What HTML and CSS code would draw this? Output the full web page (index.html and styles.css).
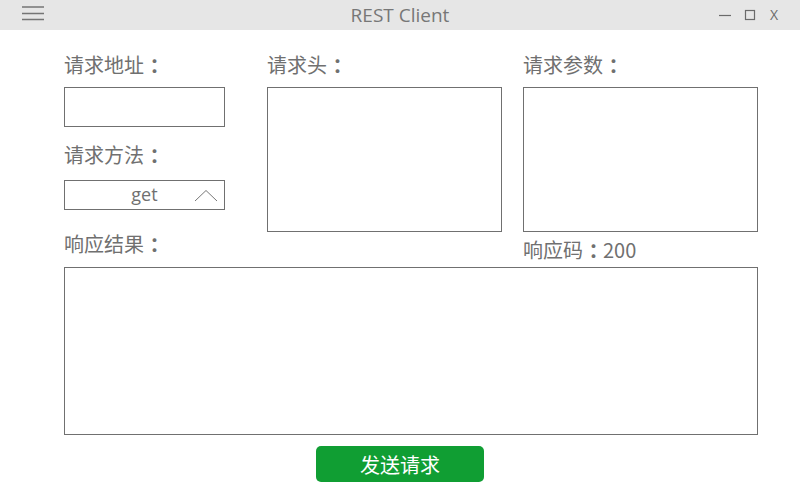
FILE: index.html
```html
<!DOCTYPE html>
<html lang="zh">
<head>
<meta charset="utf-8">
<title>REST Client</title>
<link rel="stylesheet" href="styles.css">
</head>
<body>
<div class="titlebar">
  <div class="menu-btn">
    <svg width="22" height="16" viewBox="0 0 22 16"><path d="M0 1h22M0 7.5h22M0 13.5h22" stroke="#757575" stroke-width="1.4" fill="none"/></svg>
  </div>
  <div class="title">REST Client</div>
  <div class="win-ctrls">
    <svg class="ctl" width="14" height="12" viewBox="0 0 14 12"><path d="M1 6.5h12" stroke="#6a6a6a" stroke-width="1.2"/></svg>
    <svg class="ctl" width="12" height="12" viewBox="0 0 12 12"><rect x="1.5" y="1.5" width="9" height="9" stroke="#6a6a6a" stroke-width="1.2" fill="none"/></svg>
    <span class="close">X</span>
  </div>
</div>
<main class="main">
  <div class="top">
    <div class="col1">
      <div class="label">请求地址<span class="colon">：</span></div>
      <div class="input"></div>
      <div class="label label-method">请求方法<span class="colon">：</span></div>
      <div class="select">
        <span>get</span>
        <svg class="chev" width="24" height="13" viewBox="0 0 24 13"><path d="M1 12L12 1.5L23 12" stroke="#777" stroke-width="1" fill="none"/></svg>
      </div>
    </div>
    <div class="col2">
      <div class="label">请求头<span class="colon">：</span></div>
      <div class="area"></div>
    </div>
    <div class="col3">
      <div class="label">请求参数<span class="colon">：</span></div>
      <div class="area"></div>
    </div>
  </div>
  <div class="row2">
    <div class="label">响应结果<span class="colon">：</span></div>
    <div class="label code">响应码<span class="colon">：</span>200</div>
  </div>
  <div class="result"></div>
  <div class="actions"><button class="send">发送请求</button></div>
</main>
</body>
</html>
```
FILE: styles.css
```css
html, body { margin: 0; padding: 0; background: #fff; }
body { width: 800px; height: 500px; overflow: hidden; font-family: "Noto Sans CJK SC", "Noto Sans", sans-serif; color: #707070; }
.titlebar { height: 30px; background: #e6e6e6; display: grid; grid-template-columns: 1fr auto 1fr; align-items: center; }
.menu-btn { width: 22px; height: 16px; margin-left: 22px; margin-top: -2px; }
.menu-btn svg { display: block; }
.title { font-family: "Open Sans", "Noto Sans", sans-serif; font-size: 19px; color: #777; line-height: 30px; margin-top: -1px; }
.win-ctrls { display: flex; align-items: center; justify-content: flex-end; margin-right: 22px; }
.win-ctrls .ctl { display: block; }
.win-ctrls .ctl:first-child { margin-right: 12px; }
.win-ctrls .ctl:nth-child(2) { margin-right: 14px; }
.close { font-family: "Open Sans", sans-serif; font-size: 14px; color: #6a6a6a; line-height: 12px; }
.main { padding: 23px 42px 0 64px; }
.top { display: flex; align-items: flex-start; }
.col1 { width: 161px; margin-right: 42px; }
.col2 { width: 235px; margin-right: 21px; }
.col3 { width: 235px; }
.label { font-size: 20px; line-height: 24px; height: 24px; white-space: nowrap; }
.colon { margin-left: 0.28em; letter-spacing: -0.28em; font-weight: 700; }
.input { height: 38px; border: 1px solid #707070; margin-top: 10px; }
.label-method { margin-top: 16px; }
.select { height: 28px; border: 1px solid #707070; margin-top: 13px; position: relative; display: flex; align-items: center; justify-content: center; }
.select span { font-family: "Open Sans", "Noto Sans", sans-serif; font-size: 18px; line-height: 28px; color: #707070; margin-top: -2px; }
.chev { position: absolute; left: 129px; top: 8px; }
.area { height: 143px; border: 1px solid #707070; margin-top: 10px; }
.row2 { display: flex; justify-content: space-between; align-items: flex-start; }
.code { width: 235px; margin-top: 6px; font-size: 20px; }
.result { height: 166px; border: 1px solid #707070; margin-top: 5px; }
.actions { display: flex; justify-content: center; margin-top: 11px; margin-left: -64px; margin-right: -42px; }
.send { width: 168px; height: 36px; border: none; border-radius: 5px; background: #109e33; color: #fff; font-family: "Noto Sans CJK SC", sans-serif; font-size: 20px; padding: 0; }
```
